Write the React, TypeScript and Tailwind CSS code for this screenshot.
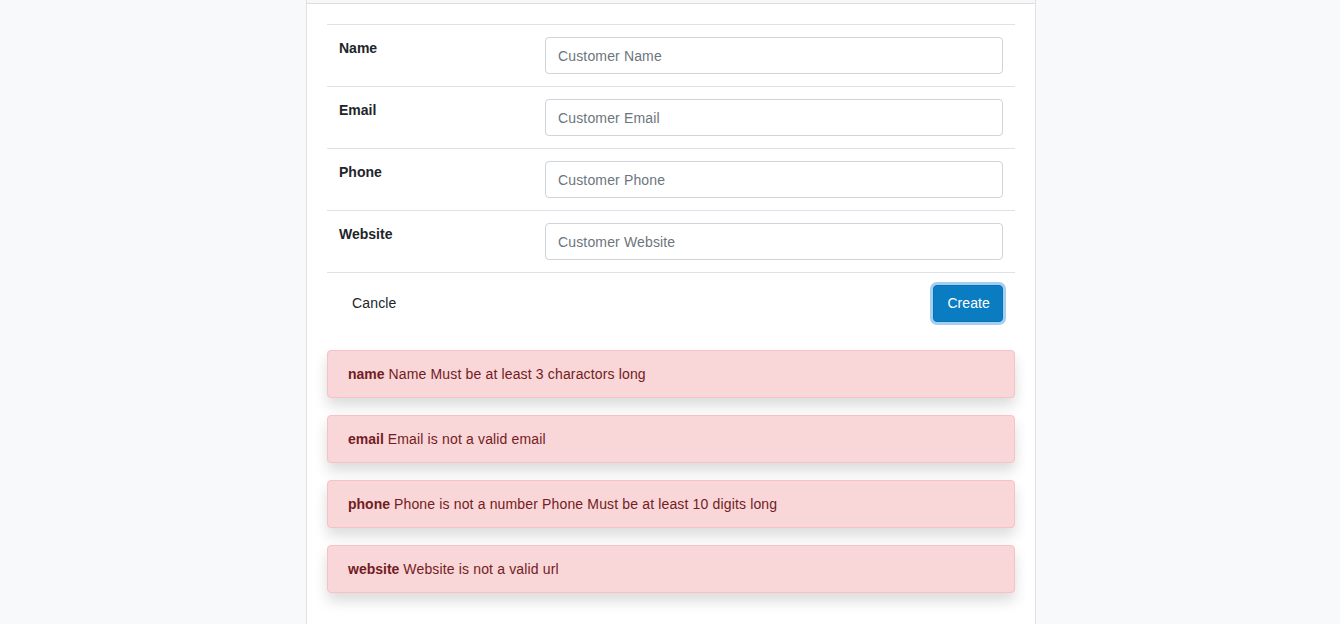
import React from "react";

const fields = [
  { label: "Name", ph: "Customer Name" },
  { label: "Email", ph: "Customer Email" },
  { label: "Phone", ph: "Customer Phone" },
  { label: "Website", ph: "Customer Website" },
];

const errors = [
  { k: "name", m: "Name Must be at least 3 charactors long" },
  { k: "email", m: "Email is not a valid email" },
  { k: "phone", m: "Phone is not a number Phone Must be at least 10 digits long" },
  { k: "website", m: "Website is not a valid url" },
];

export default function App() {
  return (
    <div
      className="min-h-[624px] bg-[#f8f9fb] flex justify-center pl-[2px]"
      style={{ fontFamily: '"Liberation Sans", Arial, sans-serif' }}
    >
      <div className="w-[730px] bg-white border-x border-[#dfe1e5] min-h-[624px]">
        <div className="h-[4px] bg-[#f7f7f8] border-b border-[#dcdee2]" />
        <div className="px-[20px] pt-[20px]">
          <div className="border-t border-[#dee2e6]">
            {fields.map((f) => (
              <div key={f.label} className="flex border-b border-[#dee2e6]">
                <div className="w-[206px] pt-[13px] pb-[11px] px-[12px] text-[14px] leading-[21px] font-bold text-[#212529]">
                  {f.label}
                </div>
                <div className="flex-1 p-[12px]">
                  <input
                    className="w-full h-[37px] border border-[#ced4da] rounded-[4px] px-[12px] text-[14px] tracking-[0.15px] text-[#495057] placeholder:text-[#6c757d] outline-none"
                    placeholder={f.ph}
                  />
                </div>
              </div>
            ))}
            <div className="flex items-center justify-between p-[12px]">
              <button className="pl-[13px] pr-[12px] h-[37px] text-[14px] tracking-[0.15px] text-[#212529]">Cancle</button>
              <button className="h-[37px] pl-[13px] pr-[12px] rounded-[4px] bg-[#0a7dc2] text-white text-[14px] tracking-[0.1px] border border-[#0a72b3] ring-[3px] ring-[#a3d0f2]">
                Create
              </button>
            </div>
          </div>
          <div className="mt-[16px] flex flex-col gap-[17px]">
            {errors.map((e) => (
              <div
                key={e.k}
                className="h-[48px] flex items-center pt-[1px] px-[20px] bg-[#f9d6d7] border border-[#f6c2c6] rounded-[4px] text-[14px] text-[#721c24] shadow-[0_8px_14px_rgba(0,0,0,0.14)]"
              >
                <strong className="font-bold mr-[4px]">{e.k}</strong>
                <span className="tracking-[0.15px]">{e.m}</span>
              </div>
            ))}
          </div>
        </div>
      </div>
    </div>
  );
}
